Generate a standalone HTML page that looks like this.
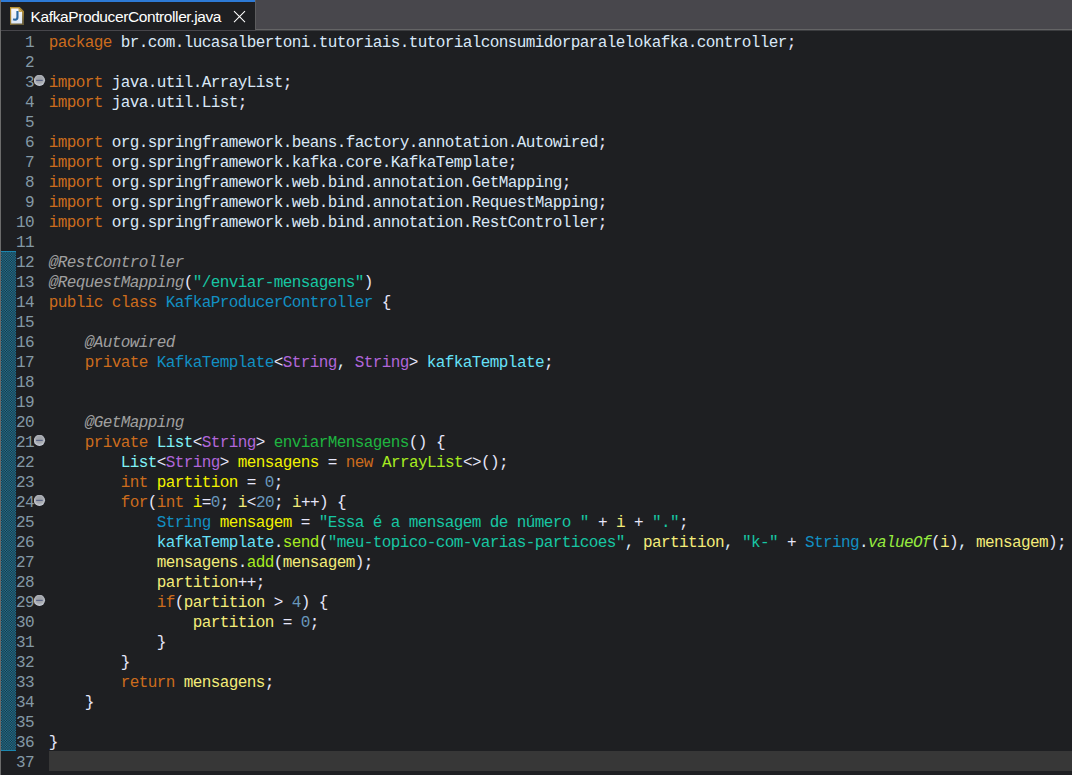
<!DOCTYPE html>
<html><head><meta charset="utf-8"><title>KafkaProducerController.java</title>
<style>
html,body{margin:0;padding:0;background:#1e1f22;}
body{width:1072px;height:775px;overflow:hidden;position:relative;font-family:"Liberation Mono",monospace;}
#bar{position:absolute;left:0;top:0;width:1072px;height:29px;background:#48474c;}
#barline{position:absolute;left:0;top:29px;width:1072px;height:1px;background:#646465;}
#barline2{position:absolute;left:0;top:30px;width:1072px;height:1px;background:linear-gradient(to right,#47464b 0,#47464b 256px,#3c3d40 256px);}
#tab{position:absolute;left:1px;top:0;width:254px;height:30px;background:#1e1f22;border-top:2px solid #2d7ad6;box-sizing:border-box;}
#tabr{position:absolute;left:255px;top:0;width:1px;height:30px;background:#5c5c5e;}
#lb{position:absolute;left:0;top:0;width:1px;height:775px;background:#6b6b6b;}
#tabtxt{position:absolute;left:30.6px;top:7px;font-family:"Liberation Sans",sans-serif;font-size:15.5px;color:#ffffff;white-space:pre;line-height:20px;letter-spacing:-0.4px;}
#quick{position:absolute;left:1px;top:251px;}
#cur{position:absolute;left:49px;top:751px;width:1023px;height:20px;background:#373737;}
.ln,.cl{position:absolute;white-space:pre;font-size:16px;line-height:20px;height:20px;letter-spacing:-0.6px;-webkit-text-stroke:0.0px;}
.ln{left:16px;width:18px;text-align:right;color:#8499a6;}
.cl{left:48.7px;color:#d9e8f7;}
.k{color:#cc6c1d}.d{color:#d9e8f7}.c{color:#1290c3}.i{color:#80f2f6}.s{color:#17c6a3}.n{color:#6897bb}
.md{color:#1eb540}.m{color:#a7ec21}.sm{color:#96ec3f;font-style:italic}.f{color:#66e1f8}.lv{color:#f2f200}.l{color:#f3ec79}
.ta{color:#b166da}.a{color:#a0a0a0;font-style:italic}.b{color:#e6e6fa}
.fold{position:absolute;left:34px;width:12px;height:12px;}
</style></head><body>
<div id="bar"></div><div id="barline"></div><div id="barline2"></div>
<div id="tab"></div><div id="tabr"></div><div id="lb"></div>

<svg style="position:absolute;left:10px;top:7px" width="14" height="18" viewBox="0 0 14 18">
<defs>
<linearGradient id="ig" x1="0" y1="0" x2="0.45" y2="1"><stop offset="0" stop-color="#bd952f"/><stop offset="0.55" stop-color="#a88533"/><stop offset="1" stop-color="#685c38"/></linearGradient>
<linearGradient id="ip" x1="0" y1="0" x2="0" y2="1"><stop offset="0" stop-color="#f6f7fb"/><stop offset="1" stop-color="#dde7f6"/></linearGradient>
<linearGradient id="if" x1="0" y1="1" x2="1" y2="0"><stop offset="0" stop-color="#ddb95c"/><stop offset="1" stop-color="#a98224"/></linearGradient>
</defs>
<polygon points="0,0 9.7,0 14,4.3 14,18 0,18" fill="url(#ig)"/>
<polygon points="1.2,1.6 8.5,1.6 12.1,5.1 12.1,16.5 1.2,16.5" fill="url(#ip)"/>
<polygon points="8.5,1.6 12.1,5.1 8.5,5.1" fill="url(#if)"/>
<path d="M7.45 4.1 V10.3 Q7.45 12.7 5.1 12.7 Q4 12.7 3.1 12.3" fill="none" stroke="#2a69a1" stroke-width="2.15"/>
</svg>
<div id="tabtxt">KafkaProducerController.java</div>
<svg style="position:absolute;left:233px;top:10px" width="14" height="14" viewBox="0 0 14 14">
<path d="M1 1.1 L12 12.1 M12 1.1 L1 12.1" stroke="#ffffff" stroke-width="1.05" fill="none"/></svg>
<svg id="quick" width="15" height="500" viewBox="0 0 15 500" shape-rendering="crispEdges"><defs><pattern id="qd" width="5" height="5" patternUnits="userSpaceOnUse"><rect x="0" y="0" width="1" height="1" fill="#1c7394"/><rect x="1" y="0" width="1" height="1" fill="#1d4556"/><rect x="2" y="0" width="1" height="1" fill="#1d546a"/><rect x="3" y="0" width="1" height="1" fill="#1d647f"/><rect x="4" y="0" width="1" height="1" fill="#1e3641"/><rect x="0" y="1" width="1" height="1" fill="#1d4556"/><rect x="1" y="1" width="1" height="1" fill="#1d5c75"/><rect x="2" y="1" width="1" height="1" fill="#1d546a"/><rect x="3" y="1" width="1" height="1" fill="#1d4d60"/><rect x="4" y="1" width="1" height="1" fill="#1d647f"/><rect x="0" y="2" width="1" height="1" fill="#1d546a"/><rect x="1" y="2" width="1" height="1" fill="#1d546a"/><rect x="2" y="2" width="1" height="1" fill="#1d546a"/><rect x="3" y="2" width="1" height="1" fill="#1d546a"/><rect x="4" y="2" width="1" height="1" fill="#1d546a"/><rect x="0" y="3" width="1" height="1" fill="#1d647f"/><rect x="1" y="3" width="1" height="1" fill="#1d4d60"/><rect x="2" y="3" width="1" height="1" fill="#1d546a"/><rect x="3" y="3" width="1" height="1" fill="#1d5c75"/><rect x="4" y="3" width="1" height="1" fill="#1d4556"/><rect x="0" y="4" width="1" height="1" fill="#1e3641"/><rect x="1" y="4" width="1" height="1" fill="#1d647f"/><rect x="2" y="4" width="1" height="1" fill="#1d546a"/><rect x="3" y="4" width="1" height="1" fill="#1d4556"/><rect x="4" y="4" width="1" height="1" fill="#1c7394"/></pattern></defs><rect width="15" height="500" fill="url(#qd)"/><rect width="15" height="1" fill="#1c86ae"/><rect y="499" width="15" height="1" fill="#1c86ae"/></svg><div id="cur"></div>
<div class="ln" style="top:33px">1</div>
<div class="cl" style="top:33px"><span class="k">package</span><span class="d"> br.com.lucasalbertoni.tutoriais.tutorialconsumidorparalelokafka.controller</span><span class="b">;</span></div>
<div class="ln" style="top:53px">2</div>
<div class="ln" style="top:73px">3</div>
<div class="cl" style="top:73px"><span class="k">import</span><span class="d"> java.util.ArrayList</span><span class="b">;</span></div>
<svg class="fold" style="top:75px" viewBox="0 0 12 12"><defs><radialGradient id="g3" cx="50%" cy="42%" r="55%"><stop offset="0" stop-color="#9c9ea3"/><stop offset="0.6" stop-color="#a6a9af"/><stop offset="1" stop-color="#c6cbd6"/></radialGradient></defs><circle cx="5.45" cy="5.35" r="5.6" fill="url(#g3)"/><rect x="2.1" y="4.8" width="6.6" height="1.2" fill="#5a6486"/></svg>
<div class="ln" style="top:93px">4</div>
<div class="cl" style="top:93px"><span class="k">import</span><span class="d"> java.util.List</span><span class="b">;</span></div>
<div class="ln" style="top:113px">5</div>
<div class="ln" style="top:133px">6</div>
<div class="cl" style="top:133px"><span class="k">import</span><span class="d"> org.springframework.beans.factory.annotation.Autowired</span><span class="b">;</span></div>
<div class="ln" style="top:153px">7</div>
<div class="cl" style="top:153px"><span class="k">import</span><span class="d"> org.springframework.kafka.core.KafkaTemplate</span><span class="b">;</span></div>
<div class="ln" style="top:173px">8</div>
<div class="cl" style="top:173px"><span class="k">import</span><span class="d"> org.springframework.web.bind.annotation.GetMapping</span><span class="b">;</span></div>
<div class="ln" style="top:193px">9</div>
<div class="cl" style="top:193px"><span class="k">import</span><span class="d"> org.springframework.web.bind.annotation.RequestMapping</span><span class="b">;</span></div>
<div class="ln" style="top:213px">10</div>
<div class="cl" style="top:213px"><span class="k">import</span><span class="d"> org.springframework.web.bind.annotation.RestController</span><span class="b">;</span></div>
<div class="ln" style="top:233px">11</div>
<div class="ln" style="top:253px">12</div>
<div class="cl" style="top:253px"><span class="a">@RestController</span></div>
<div class="ln" style="top:273px">13</div>
<div class="cl" style="top:273px"><span class="a">@RequestMapping</span><span class="b">(</span><span class="s">"/enviar-mensagens"</span><span class="b">)</span></div>
<div class="ln" style="top:293px">14</div>
<div class="cl" style="top:293px"><span class="k">public</span><span class="d"> </span><span class="k">class</span><span class="d"> </span><span class="c">KafkaProducerController</span><span class="d"> </span><span class="b">{</span></div>
<div class="ln" style="top:313px">15</div>
<div class="ln" style="top:333px">16</div>
<div class="cl" style="top:333px"><span class="d">    </span><span class="a">@Autowired</span></div>
<div class="ln" style="top:353px">17</div>
<div class="cl" style="top:353px"><span class="d">    </span><span class="k">private</span><span class="d"> </span><span class="c">KafkaTemplate</span><span class="b">&lt;</span><span class="ta">String</span><span class="d">, </span><span class="ta">String</span><span class="b">&gt;</span><span class="d"> </span><span class="f">kafkaTemplate</span><span class="b">;</span></div>
<div class="ln" style="top:373px">18</div>
<div class="ln" style="top:393px">19</div>
<div class="ln" style="top:413px">20</div>
<div class="cl" style="top:413px"><span class="d">    </span><span class="a">@GetMapping</span></div>
<div class="ln" style="top:433px">21</div>
<div class="cl" style="top:433px"><span class="d">    </span><span class="k">private</span><span class="d"> </span><span class="i">List</span><span class="b">&lt;</span><span class="ta">String</span><span class="b">&gt;</span><span class="d"> </span><span class="md">enviarMensagens</span><span class="b">()</span><span class="d"> </span><span class="b">{</span></div>
<svg class="fold" style="top:435px" viewBox="0 0 12 12"><defs><radialGradient id="g21" cx="50%" cy="42%" r="55%"><stop offset="0" stop-color="#9c9ea3"/><stop offset="0.6" stop-color="#a6a9af"/><stop offset="1" stop-color="#c6cbd6"/></radialGradient></defs><circle cx="5.45" cy="5.35" r="5.6" fill="url(#g21)"/><rect x="2.1" y="4.8" width="6.6" height="1.2" fill="#5a6486"/></svg>
<div class="ln" style="top:453px">22</div>
<div class="cl" style="top:453px"><span class="d">        </span><span class="i">List</span><span class="b">&lt;</span><span class="ta">String</span><span class="b">&gt;</span><span class="d"> </span><span class="lv">mensagens</span><span class="d"> </span><span class="b">=</span><span class="d"> </span><span class="k">new</span><span class="d"> </span><span class="m">ArrayList</span><span class="b">&lt;&gt;();</span></div>
<div class="ln" style="top:473px">23</div>
<div class="cl" style="top:473px"><span class="d">        </span><span class="k">int</span><span class="d"> </span><span class="lv">partition</span><span class="d"> </span><span class="b">=</span><span class="d"> </span><span class="n">0</span><span class="b">;</span></div>
<div class="ln" style="top:493px">24</div>
<div class="cl" style="top:493px"><span class="d">        </span><span class="k">for</span><span class="b">(</span><span class="k">int</span><span class="d"> </span><span class="lv">i</span><span class="b">=</span><span class="n">0</span><span class="b">;</span><span class="d"> </span><span class="l">i</span><span class="b">&lt;</span><span class="n">20</span><span class="b">;</span><span class="d"> </span><span class="l">i</span><span class="b">++)</span><span class="d"> </span><span class="b">{</span></div>
<svg class="fold" style="top:495px" viewBox="0 0 12 12"><defs><radialGradient id="g24" cx="50%" cy="42%" r="55%"><stop offset="0" stop-color="#9c9ea3"/><stop offset="0.6" stop-color="#a6a9af"/><stop offset="1" stop-color="#c6cbd6"/></radialGradient></defs><circle cx="5.45" cy="5.35" r="5.6" fill="url(#g24)"/><rect x="2.1" y="4.8" width="6.6" height="1.2" fill="#5a6486"/></svg>
<div class="ln" style="top:513px">25</div>
<div class="cl" style="top:513px"><span class="d">            </span><span class="c">String</span><span class="d"> </span><span class="lv">mensagem</span><span class="d"> </span><span class="b">=</span><span class="d"> </span><span class="s">"Essa é a mensagem de número "</span><span class="d"> </span><span class="b">+</span><span class="d"> </span><span class="l">i</span><span class="d"> </span><span class="b">+</span><span class="d"> </span><span class="s">"."</span><span class="b">;</span></div>
<div class="ln" style="top:533px">26</div>
<div class="cl" style="top:533px"><span class="d">            </span><span class="f">kafkaTemplate</span><span class="d">.</span><span class="m">send</span><span class="b">(</span><span class="s">"meu-topico-com-varias-particoes"</span><span class="d">, </span><span class="l">partition</span><span class="d">, </span><span class="s">"k-"</span><span class="d"> </span><span class="b">+</span><span class="d"> </span><span class="c">String</span><span class="d">.</span><span class="sm">valueOf</span><span class="b">(</span><span class="l">i</span><span class="b">)</span><span class="d">, </span><span class="l">mensagem</span><span class="b">);</span></div>
<div class="ln" style="top:553px">27</div>
<div class="cl" style="top:553px"><span class="d">            </span><span class="l">mensagens</span><span class="d">.</span><span class="m">add</span><span class="b">(</span><span class="l">mensagem</span><span class="b">);</span></div>
<div class="ln" style="top:573px">28</div>
<div class="cl" style="top:573px"><span class="d">            </span><span class="l">partition</span><span class="b">++;</span></div>
<div class="ln" style="top:593px">29</div>
<div class="cl" style="top:593px"><span class="d">            </span><span class="k">if</span><span class="b">(</span><span class="l">partition</span><span class="d"> </span><span class="b">&gt;</span><span class="d"> </span><span class="n">4</span><span class="b">)</span><span class="d"> </span><span class="b">{</span></div>
<svg class="fold" style="top:595px" viewBox="0 0 12 12"><defs><radialGradient id="g29" cx="50%" cy="42%" r="55%"><stop offset="0" stop-color="#9c9ea3"/><stop offset="0.6" stop-color="#a6a9af"/><stop offset="1" stop-color="#c6cbd6"/></radialGradient></defs><circle cx="5.45" cy="5.35" r="5.6" fill="url(#g29)"/><rect x="2.1" y="4.8" width="6.6" height="1.2" fill="#5a6486"/></svg>
<div class="ln" style="top:613px">30</div>
<div class="cl" style="top:613px"><span class="d">                </span><span class="l">partition</span><span class="d"> </span><span class="b">=</span><span class="d"> </span><span class="n">0</span><span class="b">;</span></div>
<div class="ln" style="top:633px">31</div>
<div class="cl" style="top:633px"><span class="d">            </span><span class="b">}</span></div>
<div class="ln" style="top:653px">32</div>
<div class="cl" style="top:653px"><span class="d">        </span><span class="b">}</span></div>
<div class="ln" style="top:673px">33</div>
<div class="cl" style="top:673px"><span class="d">        </span><span class="k">return</span><span class="d"> </span><span class="l">mensagens</span><span class="b">;</span></div>
<div class="ln" style="top:693px">34</div>
<div class="cl" style="top:693px"><span class="d">    </span><span class="b">}</span></div>
<div class="ln" style="top:713px">35</div>
<div class="ln" style="top:733px">36</div>
<div class="cl" style="top:733px"><span class="b">}</span></div>
<div class="ln" style="top:753px">37</div>
</body></html>
